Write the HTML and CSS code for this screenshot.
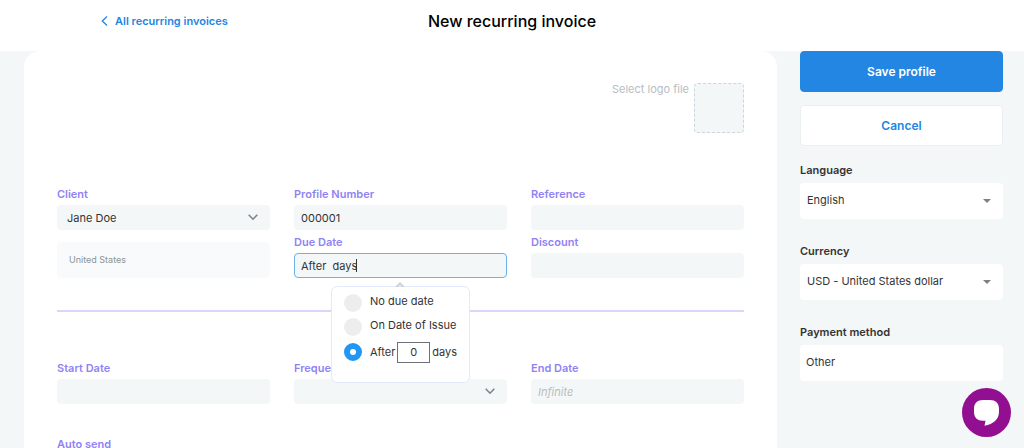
FILE: index.html
```html
<!DOCTYPE html>
<html lang="en">
<head>
    <meta charset="utf-8">
    <meta name="viewport" content="width=device-width, initial-scale=1">
    <title>New recurring invoice</title>
    <link rel="stylesheet" href="styles.css">
</head>
<body>
    <header class="header">
        <a class="header__back" href="#">
            <svg width="7" height="10" viewBox="0 0 7 10" fill="none" stroke="currentColor" stroke-width="1.3"><path d="M6 .5L1.3 5 6 9.5"/></svg>
            All recurring invoices
        </a>
        <h1 class="header__title">New recurring invoice</h1>
    </header>

    <form class="page">
        <main class="card">
            <div class="logo">
                <label class="logo__label" for="logo">Select logo file</label>
                <button class="logo__drop" id="logo" type="button" aria-label="Select logo file"></button>
            </div>

            <div class="columns columns--top">
                <div class="column">
                    <div class="field">
                        <label class="field__label" for="client">Client</label>
                        <div class="select">
                            <select class="field__input field__input--client" id="client"><option>Jane Doe</option></select>
                            <svg class="select__chevron" width="10" height="7" viewBox="0 0 10 7" fill="none" stroke="#7d8488" stroke-width="1.6"><path d="M.7 .8L5 5.2 9.3 .8"/></svg>
                        </div>
                    </div>
                    <div class="address">United States</div>
                </div>
                <div class="column">
                    <div class="field">
                        <label class="field__label" for="number">Profile Number</label>
                        <input class="field__input" id="number" type="text" value="000001">
                    </div>
                    <div class="field field--due">
                        <label class="field__label" for="due">Due Date</label>
                        <input class="field__input field__input--active" id="due" type="text" value="After  days">
                        <span class="caret"></span>
                        <div class="popover">
                            <svg class="popover__arrow" width="10" height="5" viewBox="0 0 10 5"><path d="M0 5L5 0l5 5H7L5 3 3 5z" fill="#cfd2d4"/></svg>
                            <div class="option">
                                <input class="option__radio" id="due-none" type="radio" name="due">
                                <label for="due-none">No due date</label>
                            </div>
                            <div class="option">
                                <input class="option__radio" id="due-issue" type="radio" name="due">
                                <label for="due-issue">On Date of Issue</label>
                            </div>
                            <div class="option option--days">
                                <input class="option__radio" id="due-after" type="radio" name="due" checked>
                                <label for="due-after">After</label>
                                <input class="option__days" type="text" value="0" aria-label="Number of days">
                                <span>days</span>
                            </div>
                        </div>
                    </div>
                </div>
                <div class="column">
                    <div class="field">
                        <label class="field__label" for="reference">Reference</label>
                        <input class="field__input" id="reference" type="text">
                    </div>
                    <div class="field">
                        <label class="field__label" for="discount">Discount</label>
                        <input class="field__input" id="discount" type="text">
                    </div>
                </div>
            </div>

            <hr class="divider">

            <div class="columns">
                <div class="field">
                    <label class="field__label" for="start">Start Date</label>
                    <input class="field__input" id="start" type="text">
                </div>
                <div class="field">
                    <label class="field__label" for="frequency">Frequency</label>
                    <div class="select">
                        <select class="field__input" id="frequency"><option></option></select>
                        <svg class="select__chevron" width="10" height="7" viewBox="0 0 10 7" fill="none" stroke="#7d8488" stroke-width="1.6"><path d="M.7 .8L5 5.2 9.3 .8"/></svg>
                    </div>
                </div>
                <div class="field">
                    <label class="field__label" for="end">End Date</label>
                    <input class="field__input" id="end" type="text" placeholder="Infinite">
                </div>
                <div class="field">
                    <label class="field__label" for="send">Auto send</label>
                    <input class="field__input" id="send" type="text">
                </div>
            </div>
        </main>

        <aside class="sidebar">
            <button class="button button--primary" type="submit">Save profile</button>
            <button class="button" type="button">Cancel</button>

            <div class="setting">
                <label class="setting__label" for="language">Language</label>
                <div class="select">
                    <select class="setting__input" id="language"><option>English</option></select>
                    <svg class="select__chevron" width="8" height="4" viewBox="0 0 8 4"><path d="M0 0h8L4 4z" fill="#808080"/></svg>
                </div>
            </div>
            <div class="setting">
                <label class="setting__label" for="currency">Currency</label>
                <div class="select">
                    <select class="setting__input" id="currency"><option>USD - United States dollar</option></select>
                    <svg class="select__chevron" width="8" height="4" viewBox="0 0 8 4"><path d="M0 0h8L4 4z" fill="#808080"/></svg>
                </div>
            </div>
            <div class="setting">
                <label class="setting__label" for="payment">Payment method</label>
                <input class="setting__input setting__input--text" id="payment" type="text" value="Other">
            </div>
        </aside>
    </form>

    <button class="chat" type="button" aria-label="Open chat">
        <svg width="25" height="26" viewBox="0 0 25 26"><path d="M9 0h7c5.500 0 9 3.300 9 8.500v3.500c0 7-5.500 12.300-14.500 13.800l1-5H9c-5.500 0-9-3.300-9-8.500V8.500C0 3.300 3.500 0 9 0z" fill="#fff"/></svg>
    </button>
</body>
</html>
```
FILE: styles.css
```css
* {
    box-sizing: border-box;
}

body {
    margin: 0;
    height: 100vh;
    overflow: hidden;
    background: #f3f7f8;
    color: #333;
    font-family: Inter, "Liberation Sans", sans-serif;
    font-size: 11px;
    line-height: 16px;
}

input,
select,
button {
    margin: 0;
    color: inherit;
    font: inherit;
}

button {
    cursor: pointer;
}

.header {
    display: grid;
    grid-template-columns: 1fr auto 1fr;
    align-items: center;
    height: 51px;
    padding-bottom: 9px;
    background: #fff;
}

.header__back {
    display: flex;
    align-items: center;
    gap: 7px;
    padding-left: 101px;
    color: #2386e2;
    font-weight: 600;
    text-decoration: none;
}

.header__title {
    margin: 0;
    color: #000;
    font-size: 16px;
    font-weight: 500;
    line-height: 24px;
}

.page {
    display: flex;
    align-items: flex-start;
    gap: 23px;
    padding: 0 21px 0 24px;
}

.card {
    flex: 1;
    padding: 32px 33px;
    border-radius: 16px 16px 0 0;
    background: #fff;
}

.logo {
    display: flex;
    justify-content: flex-end;
    gap: 5px;
    margin-bottom: 53px;
}

.logo__label {
    color: #b9bdc0;
    line-height: 12px;
}

.logo__drop {
    width: 50px;
    height: 50px;
    border: 1px dashed #ccd6dc;
    border-radius: 4px;
    background: #f3f7f8;
}

.columns {
    display: grid;
    grid-template-columns: repeat(3, 1fr);
    column-gap: 24px;
    row-gap: 32px;
}

.column {
    display: flex;
    flex-direction: column;
    gap: 4px;
}

.field {
    display: flex;
    flex-direction: column;
    gap: 3px;
}

.field--due {
    position: relative;
}

.field__label {
    color: #8f83f3;
    font-weight: 600;
}

.field__input {
    width: 100%;
    height: 25px;
    padding: 0 6px;
    border: 1px solid transparent;
    border-radius: 4px;
    background: #f3f7f8;
    appearance: none;
    outline: none;
}

.field__input--client {
    padding-left: 9px;
}

.field__input--active {
    border-color: #6bb1ec;
}

.field__input::placeholder {
    color: #bcbcbc;
    font-style: italic;
}

.select {
    display: grid;
    align-items: center;
}

.select > * {
    grid-area: 1 / 1;
}

.select__chevron {
    justify-self: end;
    margin-right: 12px;
    pointer-events: none;
}

.address {
    margin-top: 8px;
    padding: 10px 12px;
    border-radius: 4px;
    background: #f8fafc;
    color: #8c9496;
    font-size: 9px;
}

/* text cursor in the due date field */
.caret {
    position: absolute;
    left: 62px;
    bottom: 6px;
    width: 1px;
    height: 13px;
    background: #333;
}

.popover {
    position: absolute;
    top: 52px;
    left: 37px;
    z-index: 1;
    width: 139px;
    padding: 4px 12px 17px;
    border: 1px solid #e4e8fb;
    border-radius: 6px;
    background: #fff;
}

.popover__arrow {
    position: absolute;
    top: -5px;
    left: 63px;
}

.option {
    display: flex;
    align-items: center;
    height: 24px;
    white-space: nowrap;
}

.option label {
    margin: 0 0 4px 8px;
}

.option--days {
    gap: 2px;
    height: 26px;
}

.option--days label {
    margin: 0 0 0 6px;
}

.option__radio {
    flex: none;
    width: 18px;
    height: 18px;
    border-radius: 50%;
    background: #ededed;
    appearance: none;
}

.option__radio:checked {
    border: 6px solid #2196f3;
    background: #fff;
}

.option__days {
    width: 33px;
    height: 21px;
    padding: 0;
    border: 1px solid #6b7176;
    background: #fff;
    text-align: center;
}

.divider {
    height: 2px;
    margin: 32px 0 48px;
    border: 0;
    background: #dad5fa;
}

.sidebar {
    display: flex;
    flex-direction: column;
    width: 203px;
}

.button {
    height: 41px;
    margin-bottom: 16px;
    border: 1px solid #eaeff2;
    border-radius: 4px;
    background: #fff;
    color: #2386e2;
    font-size: 12px;
    font-weight: 600;
}

.button--primary {
    margin-bottom: 13px;
    border-color: #2386e2;
    background: #2386e2;
    color: #fff;
}

.setting {
    display: flex;
    flex-direction: column;
    gap: 5px;
    margin-bottom: 24px;
}

.setting__label {
    font-weight: 600;
}

.setting__input {
    width: 100%;
    height: 36px;
    padding: 0 7px 2px;
    border: 0;
    border-radius: 4px;
    background: #fff;
    appearance: none;
}

.setting__input--text {
    padding-left: 6px;
}

.chat {
    position: fixed;
    right: 13px;
    bottom: 11px;
    display: flex;
    align-items: center;
    justify-content: center;
    width: 49px;
    height: 49px;
    padding: 0;
    border: 0;
    border-radius: 50%;
    background: #920f92;
}
```
